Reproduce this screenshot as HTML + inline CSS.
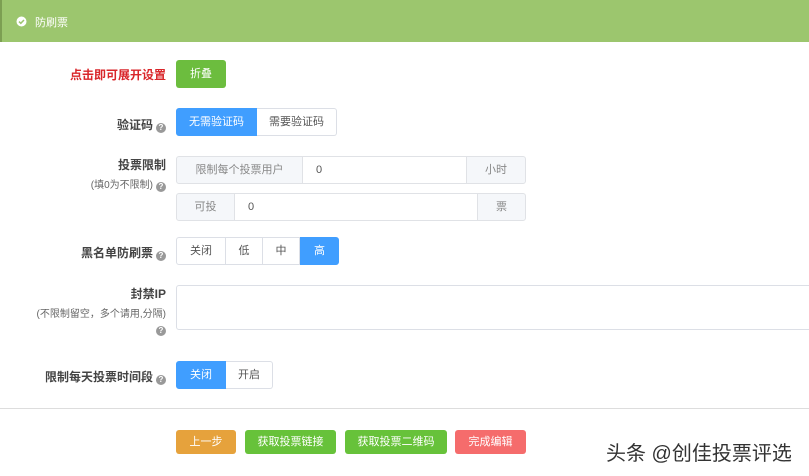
<!DOCTYPE html>
<html><head><meta charset="utf-8"><style>
*{margin:0;padding:0;box-sizing:border-box}
body{width:809px;height:476px;background:#fff;font-family:"Liberation Sans","Noto Sans CJK SC",sans-serif;font-size:12px;color:#555;position:relative;overflow:hidden}
.a{position:absolute}
.hdr{left:0;top:0;width:809px;height:42px;background:#9cc66e;border-left:2px solid #7c9f52}
.lbl{position:absolute;right:643px;text-align:right;color:#444;font-size:12px;white-space:nowrap;font-weight:bold}
.sm{font-weight:normal;color:#666}
.q{display:inline-block;width:10px;height:10px;border-radius:50%;background:#999;color:#fff;font-size:8px;line-height:10px;text-align:center;font-weight:bold;vertical-align:-1px;margin-left:3px}
.btn{position:absolute;text-align:center;color:#fff;font-size:11px;border-radius:3px}
.seg{position:absolute;border:1px solid #dcdfe6;background:#fff;color:#555;text-align:center;font-size:11px}
.bl{background:#409eff;border-color:#409eff;color:#fff}
.ad{position:absolute;background:#f5f7fa;border:1px solid #e0e2e6;color:#888;text-align:center;font-size:11px;line-height:26px}
.in{position:absolute;border:1px solid #e0e2e6;border-left:none;border-right:none;color:#555;font-size:11px;line-height:26px;padding-left:13px}
</style></head><body>
<div class="a hdr"></div>
<svg class="a" style="left:16px;top:16px" width="11" height="11" viewBox="0 0 11 11"><circle cx="5.5" cy="5.5" r="5" fill="#fff"/><path d="M3 5.6l1.8 1.7L8 4" stroke="#9cc66e" stroke-width="1.5" fill="none"/></svg>
<div class="a" style="left:35px;top:14px;color:#fff;font-size:11px">防刷票</div>

<div class="lbl" style="top:66px;color:#d9262a;font-weight:bold;font-size:12px">点击即可展开设置</div>
<div class="btn" style="left:176px;top:60px;width:50px;height:28px;line-height:28px;background:#6cbd3e">折叠</div>

<div class="lbl" style="top:116px">验证码<span class="q">?</span></div>
<div class="seg bl" style="left:176px;top:108px;width:81px;height:28px;line-height:26px;border-radius:3px 0 0 3px">无需验证码</div>
<div class="seg" style="left:257px;top:108px;width:80px;height:28px;line-height:26px;border-left:none;border-radius:0 3px 3px 0">需要验证码</div>

<div class="lbl" style="top:156px">投票限制</div>
<div class="lbl sm" style="top:176px;font-size:10px">(填0为不限制)<span class="q">?</span></div>
<div class="ad" style="left:176px;top:156px;width:127px;height:28px;border-radius:3px 0 0 3px">限制每个投票用户</div>
<div class="in" style="left:303px;top:156px;width:163px;height:28px">0</div>
<div class="ad" style="left:466px;top:156px;width:60px;height:28px;border-radius:0 3px 3px 0">小时</div>
<div class="ad" style="left:176px;top:193px;width:59px;height:28px;border-radius:3px 0 0 3px">可投</div>
<div class="in" style="left:235px;top:193px;width:242px;height:28px">0</div>
<div class="ad" style="left:477px;top:193px;width:49px;height:28px;border-radius:0 3px 3px 0">票</div>

<div class="lbl" style="top:244px">黑名单防刷票<span class="q">?</span></div>
<div class="seg" style="left:176px;top:237px;width:50px;height:28px;line-height:26px;border-radius:3px 0 0 3px">关闭</div>
<div class="seg" style="left:226px;top:237px;width:37px;height:28px;line-height:26px;border-left:none">低</div>
<div class="seg" style="left:263px;top:237px;width:37px;height:28px;line-height:26px;border-left:none">中</div>
<div class="seg bl" style="left:300px;top:237px;width:39px;height:28px;line-height:26px;border-radius:0 3px 3px 0">高</div>

<div class="lbl" style="top:285px">封禁IP</div>
<div class="lbl sm" style="top:305px;font-size:10px">(不限制留空，多个请用,分隔)</div>
<div class="lbl" style="top:321px"><span class="q">?</span></div>
<div class="a" style="left:176px;top:285px;width:640px;height:45px;border:1px solid #dcdfe6;border-radius:3px"></div>

<div class="lbl" style="top:368px">限制每天投票时间段<span class="q">?</span></div>
<div class="seg bl" style="left:176px;top:361px;width:50px;height:28px;line-height:26px;border-radius:3px 0 0 3px">关闭</div>
<div class="seg" style="left:226px;top:361px;width:47px;height:28px;line-height:26px;border-left:none;border-radius:0 3px 3px 0">开启</div>

<div class="a" style="left:0;top:408px;width:809px;height:1px;background:#ddd"></div>

<div class="btn" style="left:176px;top:430px;width:60px;height:24px;line-height:24px;background:#e6a23c">上一步</div>
<div class="btn" style="left:245px;top:430px;width:91px;height:24px;line-height:24px;background:#67c23a">获取投票链接</div>
<div class="btn" style="left:345px;top:430px;width:102px;height:24px;line-height:24px;background:#67c23a">获取投票二维码</div>
<div class="btn" style="left:455px;top:430px;width:71px;height:24px;line-height:24px;background:#f56c6c">完成编辑</div>

<div class="a" style="left:606px;top:437px;font-size:20px;color:#333;text-shadow:1px 1px 0 #fff,-1px -1px 0 #fff;white-space:nowrap">头条 @创佳投票评选</div>
</body></html>
